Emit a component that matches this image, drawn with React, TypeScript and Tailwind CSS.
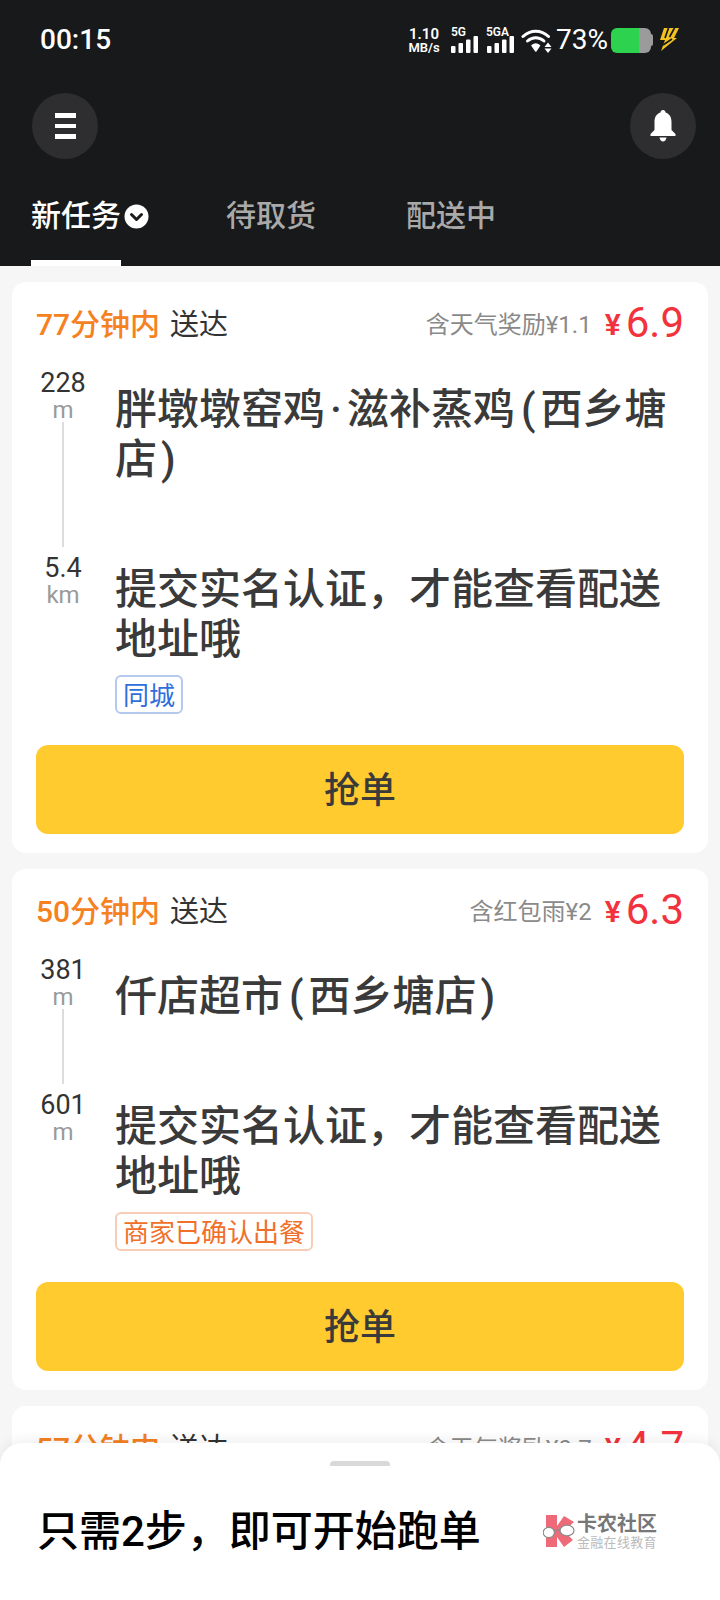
import React from "react";

const font = { fontFamily: 'Roboto, "Noto Sans CJK SC", sans-serif' };

function Bars({ className }: { className?: string }) {
  return (
    <svg width="28" height="17" viewBox="0 0 28 17" className={className}>
      <rect x="0" y="10" width="4.5" height="7" rx="1" fill="#fff" />
      <rect x="7.5" y="7" width="4.5" height="10" rx="1" fill="#fff" />
      <rect x="15" y="3.5" width="4.5" height="13.5" rx="1" fill="#fff" />
      <rect x="22.5" y="0" width="4.5" height="17" rx="1" fill="#fff" />
    </svg>
  );
}

function Net({ label, w }: { label: string; w: string }) {
  return (
    <div className={`flex flex-col ${w}`}>
      <span className="text-[12px] leading-[11px] font-semibold text-white">{label}</span>
      <Bars className="-mt-[2px] self-end" />
    </div>
  );
}

function StatusBar() {
  return (
    <div className="flex h-[80px] items-center pl-[40px] pr-[40px] text-white">
      <span className="text-[28px] font-medium leading-none">00:15</span>
      <div className="ml-auto flex items-center">
        <div className="flex w-[32px] flex-col items-center font-semibold">
          <span className="text-[15px] leading-[14px]">1.10</span>
          <span className="text-[13px] leading-[13px]">MB/s</span>
        </div>
        <Net label="5G" w="ml-[11px] w-[28px]" />
        <Net label="5GA" w="ml-[7px] w-[29px]" />
        <svg width="31" height="26" viewBox="0 0 31 26" className="ml-[6px]">
          <path d="M2 9.5C9.5 2.5 20 2.5 27.5 9.5" fill="none" stroke="#fff" strokeWidth="3" strokeLinecap="round" />
          <path d="M6.5 14C11.5 9.5 18 9.5 23 14" fill="none" stroke="#fff" strokeWidth="3" strokeLinecap="round" />
          <path d="M11 18.5C13.5 16.5 16 16.5 18.5 18.5L14.8 24Z" fill="#fff" stroke="#fff" strokeWidth="1.5" strokeLinejoin="round" />
          <path d="M27 15.5L30.5 20H23.5ZM23.5 21.5H30.5L27 26Z" fill="#fff" />
        </svg>
        <span className="ml-[4px] text-[28px] leading-none">73%</span>
        <div className="ml-[3px] flex h-[25px] items-center">
          <div className="flex h-[25px] w-[40px] overflow-hidden rounded-[6px]">
            <div className="w-[28px] bg-[#2dd24f]" />
            <div className="flex-1 bg-[#9b9b9b]" />
          </div>
          <div className="h-[12px] w-[2px] rounded-r-[2px] bg-[#9b9b9b]" />
        </div>
        <svg width="21" height="24" viewBox="0 0 21 24" className="ml-[6px]">
          <path d="M5 0H20L15 10H18L2 23L6 12H1Z" fill="#f2c21f" />
          <path d="M9.5 0L6 10M15.5 0L10.5 9M4 17L13 11" stroke="#18191b" strokeWidth="1.7" fill="none" />
        </svg>
      </div>
    </div>
  );
}

function Header() {
  return (
    <header className="flex h-[266px] flex-col bg-[#18191b]">
      <StatusBar />
      <div className="mt-[13px] flex items-center justify-between pl-[32px] pr-[24px]">
        <div className="flex size-[66px] items-center justify-center rounded-full bg-[#2e2e30]">
          <div className="flex w-[21px] flex-col gap-[6px]">
            <div className="h-[5px] bg-white" />
            <div className="h-[4px] bg-white" />
            <div className="h-[5px] bg-white" />
          </div>
        </div>
        <div className="flex size-[66px] items-center justify-center rounded-full bg-[#2e2e30]">
          <svg width="26" height="32" viewBox="0 0 26 32">
            <path d="M13 0C14.5 0 15.5 1 15.5 2.6C19.8 4 21.5 7.5 21.5 12V20L25.5 24V26H0.5V24L4.5 20V12C4.5 7.5 6.2 4 10.5 2.6C10.5 1 11.5 0 13 0Z" fill="#fff" />
            <path d="M9.5 27.5H16.5C16 30 14.7 31.5 13 31.5C11.3 31.5 10 30 9.5 27.5Z" fill="#fff" />
          </svg>
        </div>
      </div>
      <nav className="mt-[25px] flex flex-1 items-start pl-[31px] pt-[10px] text-[30px] font-medium leading-[44px] text-[#a9a9a9]">
        <div className="relative flex w-[195px] items-start self-stretch text-white">
          <span className="w-[90px]">新任务</span>
          <svg width="25" height="25" viewBox="0 0 25 25" className="ml-[3px] mt-[10px]">
            <circle cx="12.5" cy="12.5" r="12" fill="#fff" />
            <path d="M7.5 10.5L12.5 15.5L17.5 10.5" fill="none" stroke="#18191b" strokeWidth="3" strokeLinecap="round" strokeLinejoin="round" />
          </svg>
          <div className="absolute bottom-0 left-0 h-[6px] w-[90px] bg-white" />
        </div>
        <span className="w-[180px]">待取货</span>
        <span>配送中</span>
      </nav>
    </header>
  );
}

type CardProps = {
  mins: string;
  bonus: string;
  price: string;
  d1: string;
  u1: string;
  d2: string;
  u2: string;
  title: React.ReactNode;
  tag?: { text: string; cls: string };
};

function Dist({ n, u }: { n: string; u: string }) {
  return (
    <>
      <span className="pt-[1px] text-[27px] leading-[32px] text-[#333]">{n}</span>
      <span className="text-[24px] leading-[23px] text-[#9a9a9a]">{u}</span>
    </>
  );
}

function Card({ mins, bonus, price, d1, u1, d2, u2, title, tag }: CardProps) {
  return (
    <section className="rounded-[14px] bg-white px-[24px] pb-[19px] pt-[21px]">
      <div className="flex h-[40px] items-center pt-[3px]">
        <span className="text-[30px] font-medium leading-[40px] text-[#f5811f]">{mins}</span>
        <span className="ml-[10px] text-[29px] leading-[40px] text-[#333]">送达</span>
        <span className="ml-auto text-[24px] leading-[40px] text-[#8a8a8a]">{bonus}</span>
        <span className="ml-[13px] text-[30px] font-semibold leading-[40px] text-[#f2323c]">¥</span>
        <span className="ml-[5px] -mt-[3px] text-[42px] leading-[40px] text-[#f2323c]">{price}</span>
      </div>
      <div className="mt-[23px] flex">
        <div className="flex w-[54px] flex-col items-center pb-[4px]">
          <Dist n={d1} u={u1} />
          <div className="w-[2px] flex-1 bg-[#dcdcdc]" />
        </div>
        <div className="ml-[25px] flex-1 pb-[66px] pt-[19px] text-[42px] font-medium leading-[50px] text-[#3a3a3a]">{title}</div>
      </div>
      <div className="flex">
        <div className="flex w-[54px] flex-col items-center">
          <Dist n={d2} u={u2} />
        </div>
        <div className="ml-[25px] flex-1 pt-[14px]">
          <div className="text-[42px] font-medium leading-[50px] text-[#3a3a3a]">提交实名认证，才能查看配送地址哦</div>
          {tag && (
            <div className={`mt-[10px] inline-flex h-[39px] items-center rounded-[6px] border-2 px-[6px] pt-[2px] text-[26px] leading-none ${tag.cls}`}>
              {tag.text}
            </div>
          )}
        </div>
      </div>
      <div className="mt-[31px] flex h-[89px] items-center justify-center rounded-[12px] bg-[#ffcb2e] pt-[3px] text-[36px] font-medium text-[#3a3a3a]">
        抢单
      </div>
    </section>
  );
}

function Logo() {
  return (
    <div className="flex items-center">
      <svg width="36" height="36" viewBox="0 0 36 36">
        <path d="M3 1H14V12L21 2L31 8L21 17L30 26L21 33L14 23V33H3Z" fill="#ee6a78" />
        <path d="M11 17.5C13 16 16 16 18 16.5" fill="none" stroke="#8a8a8a" strokeWidth="1.2" />
        <ellipse cx="5.8" cy="18.5" rx="5.6" ry="5.2" fill="#fff" stroke="#8a8a8a" strokeWidth="1.2" />
        <ellipse cx="24" cy="16.5" rx="7" ry="5.4" fill="#fff" stroke="#8a8a8a" strokeWidth="1.2" />
      </svg>
      <div className="-ml-[2px] flex flex-col">
        <span className="text-[20px] font-bold leading-[21px] text-[#777]">卡农社区</span>
        <span className="text-[13px] leading-[15px] tracking-[0.3px] text-[#bbb]">金融在线教育</span>
      </div>
    </div>
  );
}

export default function App() {
  return (
    <div style={font} className="relative h-[1600px] w-[720px] overflow-hidden bg-[#f6f6f6]">
      <Header />
      <main className="flex flex-col gap-[16px] px-[12px] pt-[16px]">
        <Card
          mins="77分钟内"
          bonus="含天气奖励¥1.1"
          price="6.9"
          d1="228"
          u1="m"
          d2="5.4"
          u2="km"
          title={
            <>
              胖墩墩窑鸡<span className="mx-[5px]">·</span>滋补蒸鸡<span className="ml-[6px] mr-[5px]">(</span>西乡塘店<span className="ml-[4px]">)</span>
            </>
          }
          tag={{ text: "同城", cls: "border-[#b5c8ee] text-[#2f6fdc]" }}
        />
        <Card
          mins="50分钟内"
          bonus="含红包雨¥2"
          price="6.3"
          d1="381"
          u1="m"
          d2="601"
          u2="m"
          title={
            <>
              仟店超市<span className="ml-[6px] mr-[5px]">(</span>西乡塘店<span className="ml-[4px]">)</span>
            </>
          }
          tag={{ text: "商家已确认出餐", cls: "border-[#f8cdb8] text-[#f0702a]" }}
        />
        <Card mins="57分钟内" bonus="含天气奖励¥0.7" price="4.7" d1="" u1="" d2="" u2="" title="" />
      </main>
      <div className="absolute inset-x-0 bottom-0 h-[157px] rounded-t-[22px] bg-white shadow-[0_-4px_12px_rgba(0,0,0,0.06)]">
        <div className="mx-auto mt-[18px] h-[5px] w-[60px] rounded-t-[4px] bg-[#d9d9d9]" />
        <div className="mt-[41px] flex items-center pl-[37px] pr-[63px]">
          <span className="text-[42px] font-medium leading-[50px] text-black">只需2步，即可开始跑单</span>
          <div className="ml-auto">
            <Logo />
          </div>
        </div>
      </div>
    </div>
  );
}
